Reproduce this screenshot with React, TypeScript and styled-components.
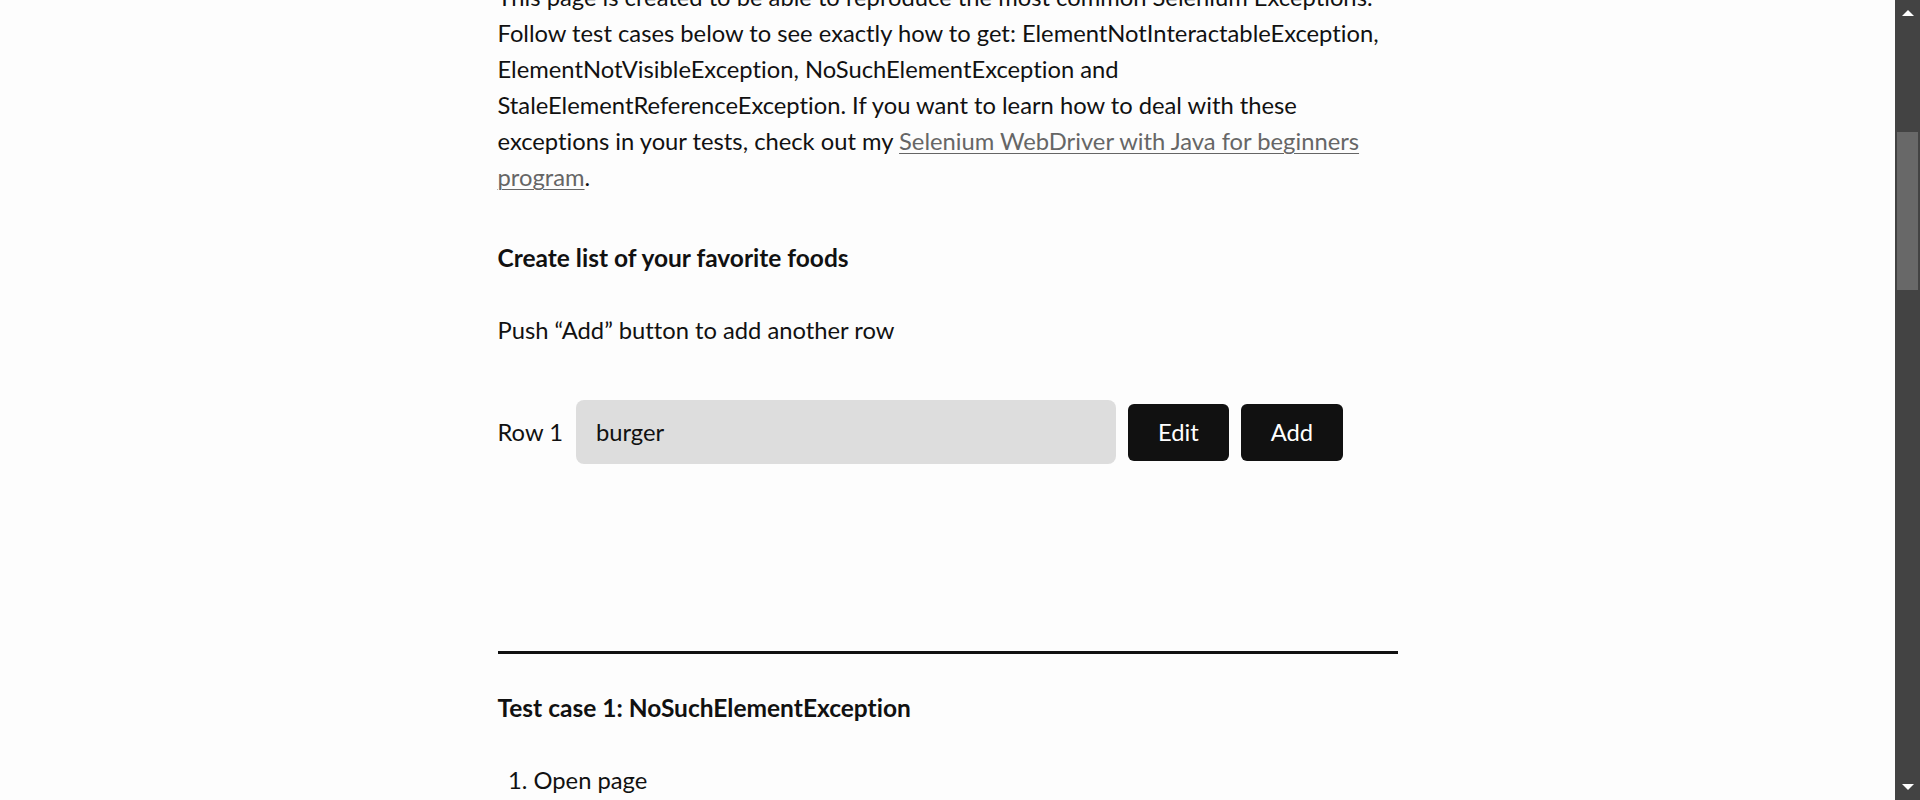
import React from "react";
import styled, { createGlobalStyle } from "styled-components";

const Global = createGlobalStyle`
  html, body { margin: 0; padding: 0; height: 100%; overflow: hidden; }
  body {
    background: #fdfdfd;
    font-family: Lato, "Open Sans", sans-serif;
    color: #111;
    font-variant-ligatures: none;
  }
`;

const Page = styled.div`
  display: flex;
  height: 800px;
  width: 1920px;
`;

const Main = styled.main`
  flex: 1;
  overflow: hidden;
  display: flex;
  justify-content: center;
`;

const Article = styled.article`
  width: 900px;
  margin-top: -21px;
  font-size: 23.75px;
  line-height: 36px;
`;

const Paragraph = styled.p<{ $mt?: number }>`
  margin: ${(p) => p.$mt ?? 0}px 0 0;
`;

const Link = styled.a`
  color: #666;
  text-decoration: underline;
  text-underline-offset: 3px;
  text-decoration-thickness: 1px;
`;

const Heading = styled.h4<{ $mt: number }>`
  margin: ${(p) => p.$mt}px 0 0;
  font-size: 24.5px;
  line-height: 36px;
  font-weight: 700;
`;

const Row = styled.div`
  display: flex;
  align-items: center;
  margin-top: 52px;
  height: 64px;
`;

const RowLabel = styled.label`
  margin-right: 13px;
`;

const Input = styled.input`
  box-sizing: border-box;
  width: 540px;
  height: 64px;
  border: none;
  border-radius: 8px;
  background: #dddddd;
  padding: 0 20px;
  font-family: Lato, sans-serif;
  font-size: 23.75px;
  color: #111;
  outline: none;
`;

const Button = styled.button`
  box-sizing: border-box;
  height: 57px;
  margin-left: 12px;
  padding: 0 30px;
  border: none;
  border-radius: 6px;
  background: #111;
  color: #fff;
  font-family: Lato, sans-serif;
  font-size: 23.75px;
  font-variant-ligatures: none;
`;

const Rule = styled.hr`
  margin: 187px 0 0;
  border: none;
  height: 3px;
  background: #111;
`;

const Steps = styled.ol`
  margin: 36px 0 0;
  padding-left: 36px;
`;

const Scrollbar = styled.div`
  width: 25px;
  background: #434343;
  display: flex;
  flex-direction: column;
  align-items: center;
`;

const Arrow = styled.svg<{ $top?: number; $bottom?: number }>`
  margin-top: ${(p) => p.$top ?? 0}px;
  margin-bottom: ${(p) => p.$bottom ?? 0}px;
  display: block;
`;

const Thumb = styled.div`
  width: 21px;
  height: 158px;
  margin-top: 116px;
  background: #686868;
`;

const Spacer = styled.div`
  flex: 1;
`;

export default function App() {
  return (
    <Page>
      <Global />
      <Main>
        <Article>
          <Paragraph>
            This page is created to be able to reproduce the most common Selenium Exceptions.
            Follow test cases below to see exactly how to get: ElementNotInteractableException,
            ElementNotVisibleException, NoSuchElementException and
            StaleElementReferenceException. If you want to learn how to deal with these
            exceptions in your tests, check out my{" "}
            <Link href="#">Selenium WebDriver with Java for beginners program</Link>.
          </Paragraph>
          <Heading $mt={45}>Create list of your favorite foods</Heading>
          <Paragraph $mt={36}>Push “Add” button to add another row</Paragraph>
          <Row>
            <RowLabel>Row 1</RowLabel>
            <Input defaultValue="burger" />
            <Button>Edit</Button>
            <Button>Add</Button>
          </Row>
          <Rule />
          <Heading $mt={36}>Test case 1: NoSuchElementException</Heading>
          <Steps>
            <li>Open page</li>
            <li>Click Add button</li>
          </Steps>
        </Article>
      </Main>
      <Scrollbar>
        <Arrow $top={10} width="12" height="6" viewBox="0 0 12 6">
          <polygon points="6,0 12,6 0,6" fill="#fff" />
        </Arrow>
        <Thumb />
        <Spacer />
        <Arrow $bottom={10} width="12" height="6" viewBox="0 0 12 6">
          <polygon points="0,0 12,0 6,6" fill="#fff" />
        </Arrow>
      </Scrollbar>
    </Page>
  );
}
